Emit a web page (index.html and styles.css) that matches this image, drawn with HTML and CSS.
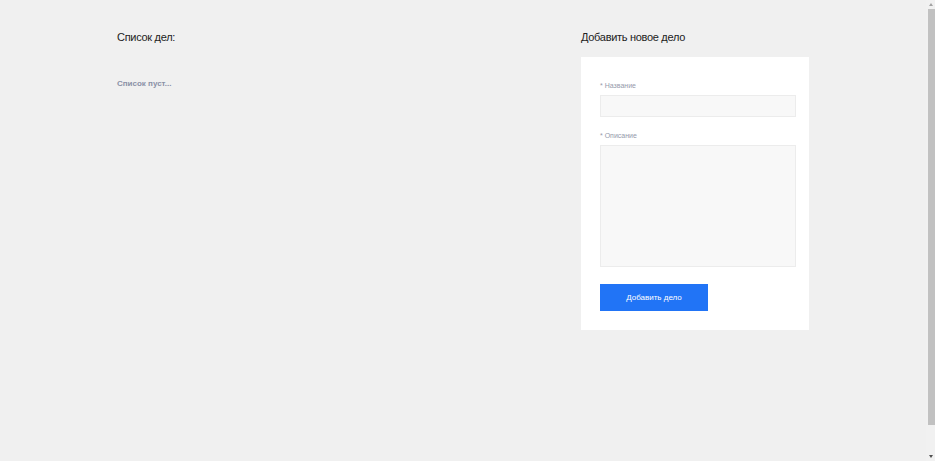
FILE: index.html
```html
<!DOCTYPE html>
<html lang="ru">
<head>
<meta charset="utf-8">
<title>Список дел</title>
<link rel="stylesheet" href="styles.css">
</head>
<body>
<div class="page">
  <div class="container">
    <section class="list-col">
      <h2 class="title">Список дел:</h2>
      <p class="empty">Список пуст...</p>
    </section>
    <section class="form-col">
      <h2 class="title">Добавить новое дело</h2>
      <form class="card">
        <label class="label" for="name"><span class="req">*</span> Название</label>
        <input class="input" id="name" type="text">
        <label class="label label-gap" for="desc"><span class="req">*</span> Описание</label>
        <textarea class="textarea" id="desc"></textarea>
        <button class="btn" type="button">Добавить дело</button>
      </form>
    </section>
  </div>
</div>
<div class="scrollbar" aria-hidden="true">
  <span class="arrow arrow-up"></span>
  <span class="thumb"></span>
  <span class="arrow arrow-down"></span>
</div>
</body>
</html>
```

FILE: styles.css
```css
html {
  background: #f0f0f0;
  overflow: hidden;
}
body {
  margin: 0;
  font-family: "Liberation Sans", Arial, sans-serif;
  color: #222;
}
.page {
  padding: 30px 9px 0 0;
}
.container {
  width: 692px;
  margin: 0 auto;
  display: flex;
  justify-content: space-between;
  align-items: flex-start;
}
.title {
  margin: 0;
  font-size: 11px;
  font-weight: normal;
  line-height: 14px;
  letter-spacing: -0.3px;
  color: #222;
}
.empty {
  margin: 34px 0 0;
  font-size: 8px;
  font-weight: bold;
  color: #8a90a6;
  line-height: 12px;
}
.form-col {
  width: 228px;
}
.card {
  margin-top: 13px;
  background: #fff;
  padding: 24px 13px 19px 19px;
  display: flex;
  flex-direction: column;
  align-items: flex-start;
}
.label {
  font-size: 7px;
  line-height: 10px;
  color: #959aab;
}
.req {
  color: #959aab;
}
.label-gap {
  margin-top: 14px;
}
.input, .textarea {
  box-sizing: border-box;
  width: 196px;
  margin: 4px 0 0;
  border: 1px solid #ececec;
  background: #f8f8f8;
  outline: none;
  font: inherit;
}
.input {
  height: 22px;
}
.textarea {
  height: 122px;
  resize: none;
  display: block;
}
.btn {
  margin-top: 17px;
  width: 108px;
  height: 27px;
  border: 0;
  background: #2174f6;
  color: #fff;
  font-family: "Liberation Sans", Arial, sans-serif;
  font-size: 8px;
  cursor: pointer;
}
.scrollbar {
  position: fixed;
  top: 0;
  right: 0;
  bottom: 0;
  width: 9px;
  background: #f1f1f1;
  display: flex;
  flex-direction: column;
  align-items: center;
  padding: 3px 0;
  box-sizing: border-box;
}
.thumb {
  flex: 0 0 416px;
  width: 7px;
  margin: 3px 0 0 1px;
  background: #c1c1c1;
}
.arrow {
  width: 0;
  height: 0;
  border-left: 2.5px solid transparent;
  border-right: 2.5px solid transparent;
}
.arrow-up {
  border-bottom: 3px solid #a3a3a3;
}
.arrow-down {
  margin-top: auto;
  border-top: 3px solid #505050;
}
```
